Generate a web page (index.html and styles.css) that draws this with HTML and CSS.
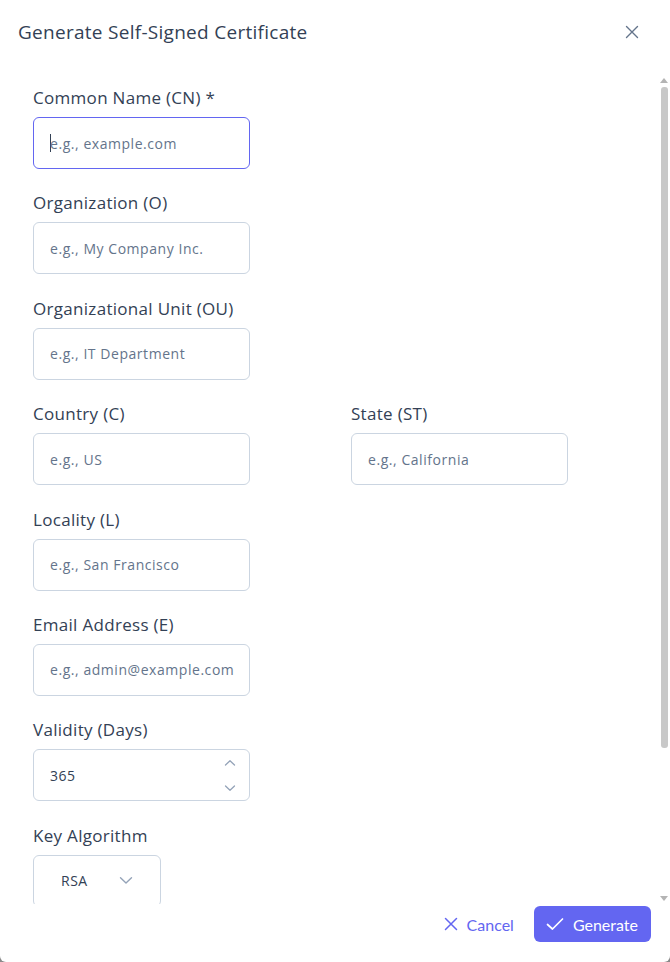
FILE: index.html
```html
<!DOCTYPE html>
<html lang="en">
<head>
<meta charset="utf-8">
<title>Generate Self-Signed Certificate</title>
<link rel="stylesheet" href="styles.css">
</head>
<body>
<div class="dialog">
  <div class="header">
    <h1 class="title">Generate Self-Signed Certificate</h1>
    <button class="close" aria-label="Close">
      <svg width="14" height="14" viewBox="0 0 14 14"><path d="M1.5 1.5 L12.5 12.5 M12.5 1.5 L1.5 12.5" stroke="#64748b" stroke-width="1.4" stroke-linecap="round" fill="none"/></svg>
    </button>
  </div>
  <div class="body">
    <div class="content">
      <div class="form">
        <div class="field">
          <label class="label">Common Name (CN) *</label>
          <div class="input focus"><span class="caret"></span><span class="ph">e.g., example.com</span></div>
        </div>
        <div class="field">
          <label class="label">Organization (O)</label>
          <div class="input"><span class="ph">e.g., My Company Inc.</span></div>
        </div>
        <div class="field">
          <label class="label">Organizational Unit (OU)</label>
          <div class="input"><span class="ph">e.g., IT Department</span></div>
        </div>
        <div class="row">
          <div class="field">
            <label class="label">Country (C)</label>
            <div class="input"><span class="ph">e.g., US</span></div>
          </div>
          <div class="field">
            <label class="label">State (ST)</label>
            <div class="input"><span class="ph">e.g., California</span></div>
          </div>
        </div>
        <div class="field">
          <label class="label">Locality (L)</label>
          <div class="input"><span class="ph">e.g., San Francisco</span></div>
        </div>
        <div class="field">
          <label class="label">Email Address (E)</label>
          <div class="input"><span class="ph">e.g., admin@example.com</span></div>
        </div>
        <div class="field">
          <label class="label">Validity (Days)</label>
          <div class="input number">
            <span class="val">365</span>
            <span class="spin">
              <svg width="12" height="8" viewBox="0 0 12 8"><path d="M1.5 6 L6 1.8 L10.5 6" stroke="#94a3b8" stroke-width="1.3" fill="none" stroke-linecap="round" stroke-linejoin="round"/></svg>
              <svg width="12" height="8" viewBox="0 0 12 8"><path d="M1.5 2 L6 6.2 L10.5 2" stroke="#94a3b8" stroke-width="1.3" fill="none" stroke-linecap="round" stroke-linejoin="round"/></svg>
            </span>
          </div>
        </div>
        <div class="field">
          <label class="label">Key Algorithm</label>
          <div class="select">
            <span class="val">RSA</span>
            <svg width="14" height="9" viewBox="0 0 14 9"><path d="M1.5 1.8 L7 7 L12.5 1.8" stroke="#94a3b8" stroke-width="1.4" fill="none" stroke-linecap="round" stroke-linejoin="round"/></svg>
          </div>
        </div>
      </div>
    </div>
    <div class="scrollbar" aria-hidden="true">
      <svg class="arrow" width="8" height="6" viewBox="0 0 8 6"><path d="M0 6 L4 1 L8 6 Z" fill="#b4b4b4"/></svg>
      <div class="thumb"></div>
      <div class="track-rest"></div>
      <svg class="arrow" width="8" height="6" viewBox="0 0 8 6"><path d="M0 0 L4 5 L8 0 Z" fill="#b4b4b4"/></svg>
    </div>
  </div>
  <div class="footer">
    <button class="btn text">
      <svg width="14" height="14" viewBox="0 0 14 14"><path d="M1.5 1.5 L12.5 12.5 M12.5 1.5 L1.5 12.5" stroke="#6366f1" stroke-width="1.5" stroke-linecap="round" fill="none"/></svg>
      <span>Cancel</span>
    </button>
    <button class="btn primary">
      <svg width="18" height="14" viewBox="0 0 18 14"><path d="M1.5 7.5 L6.5 12 L16.5 2" stroke="#ffffff" stroke-width="1.7" stroke-linecap="round" stroke-linejoin="round" fill="none"/></svg>
      <span>Generate</span>
    </button>
  </div>
</div>
</body>
</html>
```
FILE: styles.css
```css
* { box-sizing: border-box; }
html, body { margin: 0; padding: 0; height: 100%; }
body {
  background: #8a8a8a;
  font-family: "Open Sans", "Noto Sans", sans-serif;
  color: #334155;
}
.dialog {
  height: 100vh;
  background: #ffffff;
  border-radius: 0 0 6px 6px;
  display: flex;
  flex-direction: column;
  overflow: hidden;
}
.header {
  display: flex;
  align-items: center;
  justify-content: space-between;
  padding: 18px 18px 24px 18px;
  flex: none;
}
.title {
  margin: 0;
  font-size: 19px;
  font-weight: 400;
  line-height: 26px;
  letter-spacing: 0.28px;
  color: #334155;
}
.close {
  border: 0;
  background: transparent;
  padding: 0;
  width: 28px;
  height: 28px;
  display: flex;
  align-items: center;
  justify-content: center;
  margin-right: 6px;
}
.body {
  flex: 1;
  min-height: 0;
  display: flex;
}
.content {
  flex: 1;
  min-width: 0;
  overflow: hidden;
  padding: 16px 0 40px 33px;
}
.scrollbar {
  flex: none;
  width: 8px;
  margin-right: 2px;
  padding: 7px 0 2px 0;
  display: flex;
  flex-direction: column;
  align-items: center;
}
.scrollbar .arrow { display: block; flex: none; }
.thumb {
  flex: none;
  width: 7px;
  height: 661px;
  margin-top: 4px;
  background: #c8c8c8;
  border-radius: 3px;
}
.track-rest { flex: 1; }
.form {
  display: flex;
  flex-direction: column;
  gap: 22.4px;
}
.row {
  display: grid;
  grid-template-columns: 318px 1fr;
}
.field {
  display: flex;
  flex-direction: column;
  align-items: flex-start;
  gap: 7px;
}
.label {
  font-size: 17px;
  line-height: 24px;
  letter-spacing: 0.3px;
  color: #334155;
}
.input {
  width: 217px;
  height: 52px;
  border: 1px solid #cbd5e1;
  border-radius: 6px;
  padding: 0 16px;
  display: flex;
  align-items: center;
  font-size: 14px;
  letter-spacing: 0.55px;
}
.input.focus { border-color: #6366f1; }
.caret {
  width: 1px;
  height: 18px;
  background: #334155;
  margin-right: -1px;
}
.ph { color: #64748b; white-space: nowrap; }
.val { color: #334155; font-size: 14px; letter-spacing: 0.5px; }
.number {
  justify-content: space-between;
  padding-right: 13px;
}
.spin {
  display: flex;
  flex-direction: column;
  gap: 17px;
}
.spin svg { display: block; }
.select {
  width: 128px;
  height: 52px;
  border: 1px solid #cbd5e1;
  border-radius: 6px;
  padding: 0 27px 0 27px;
  display: flex;
  align-items: center;
  justify-content: space-between;
}
.footer {
  flex: none;
  display: flex;
  justify-content: flex-end;
  align-items: center;
  gap: 8px;
  padding: 2px 19px 20px 18px;
}
.btn {
  font-family: Lato, "Noto Sans", sans-serif;
  font-size: 16px;
  height: 36px;
  border-radius: 6px;
  border: 0;
  display: flex;
  align-items: center;
  gap: 9px;
  padding: 0 12px;
}
.btn.text {
  background: transparent;
  color: #6366f1;
}
.btn.primary {
  background: #6366f1;
  color: #ffffff;
  padding: 0 13px 0 12px;
}
```
